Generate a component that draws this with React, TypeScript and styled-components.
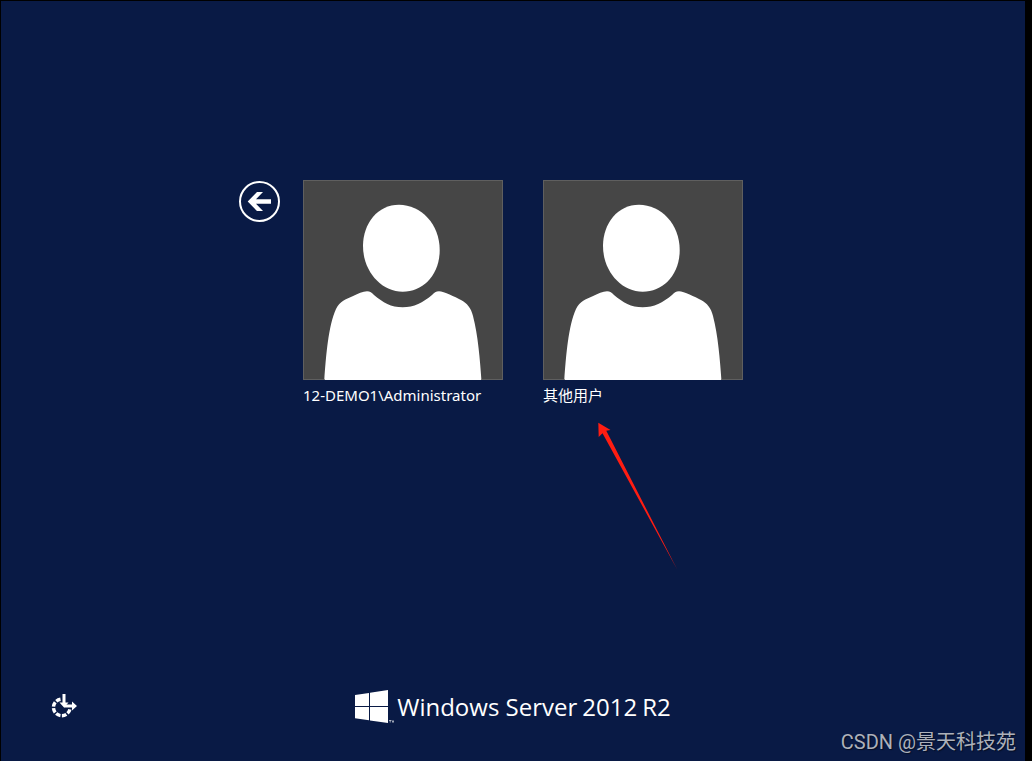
import React from "react";
import styled, { createGlobalStyle } from "styled-components";

const GlobalStyle = createGlobalStyle`
  * { box-sizing: border-box; }
  body {
    margin: 0;
    background: #000;
    color: #fff;
    font-family: "Noto Sans", "Noto Sans CJK SC", sans-serif;
  }
`;

const Screen = styled.div`
  position: relative;
  display: flex;
  flex-direction: column;
  min-height: 100vh;
  border: solid #000;
  border-width: 1px 7px 0 1px;
  background: #091a45;
`;

const Main = styled.main`
  flex: 1;
  display: flex;
  justify-content: center;
  align-items: flex-start;
  gap: 23px;
  padding: 179px 44px 24px 0;
`;

const BackButton = styled.button`
  display: block;
  margin-top: 1px;
  padding: 0;
  border: 0;
  background: none;
  color: inherit;
  cursor: pointer;

  svg { display: block; }
`;

const UserList = styled.ul`
  display: flex;
  gap: 40px;
  margin: 0;
  padding: 0;
  list-style: none;
`;

const UserItem = styled.li`
  position: relative;
  width: 200px;
`;

const UserButton = styled.button`
  display: block;
  width: 100%;
  padding: 0;
  border: 0;
  background: none;
  color: inherit;
  font: inherit;
  font-size: 15px;
  line-height: 20px;
  text-align: left;
  white-space: nowrap;
  cursor: pointer;
`;

const Avatar = styled.svg`
  display: block;
  width: 100%;
  margin-bottom: 5px;
  background: #464646;
`;

const Pointer = styled.svg`
  position: absolute;
  top: 242px;
  left: 54px;
  pointer-events: none;
`;

const Footer = styled.footer`
  display: grid;
  grid-template-columns: 1fr auto 1fr;
  align-items: center;
  padding: 0 50px 36px;
`;

const AccessButton = styled.button`
  justify-self: start;
  padding: 0;
  border: 0;
  background: none;
  color: inherit;
  cursor: pointer;

  svg { display: block; }
`;

const Brand = styled.div`
  display: flex;
  align-items: center;
  gap: 3px;
  height: 36px;
`;

const BrandName = styled.span`
  display: flex;
  gap: 5px;
  font-family: "Open Sans", sans-serif;
  font-size: 24px;
  font-weight: 400;
  line-height: 34px;
  white-space: nowrap;
`;

const Watermark = styled.div`
  position: absolute;
  right: 9px;
  bottom: 5px;
  color: #adb1ba;
  font-family: Roboto, "Noto Sans CJK SC", sans-serif;
  font-size: 20px;
  line-height: 28px;
  text-shadow: 1px 1px 1px #00000080;
`;

function UserTile({ name, children }: { name: string; children?: React.ReactNode }) {
  return (
    <UserItem>
      <UserButton type="button">
        <Avatar viewBox="0 0 200 200" aria-hidden="true">
          <path
            fill="#fff"
            d="M96 24.7C118 24.7 136.7 44 136.7 70C136.7 95 120 111.7 99.7 111.7C78 111.7 60 91 60 66C60 43 75 24.7 96 24.7Z"
          />
          <path
            fill="#fff"
            d="M21.3 200C23 176 25.500 145 33 129C37 121 43 119 49 116.500C55 113.500 60 111.500 64 111.300C67 111.300 69 113 71 115C80 122.500 88 127.300 99.700 127.300C111 127.300 120 122.500 129 115C131 113 133 111.300 136 111.300C141 111.600 152 117 158 120C164 123 168 128 170 136C175 155 177 180 178.400 200Z"
          />
          <rect x="0.5" y="0.5" width="199" height="199" fill="none" stroke="#696969" strokeOpacity="0.7" />
          <path d="M22 199.500H178" stroke="#fff" />
        </Avatar>
        {name}
      </UserButton>
      {children}
    </UserItem>
  );
}

export default function App() {
  return (
    <>
      <GlobalStyle />
      <Screen>
        <Main>
          <BackButton type="button" aria-label="返回">
            <svg width="41" height="41" viewBox="0 0 41 41">
              <circle cx="20.5" cy="20.5" r="19.500" fill="none" stroke="#fff" strokeWidth="2" />
              <path fill="#fff" d="M8.700 20.500L18 11H24L17 18.200H32V22.800H17L24 30H18Z" />
            </svg>
          </BackButton>
          <UserList>
            <UserTile name="12-DEMO1\Administrator" />
            <UserTile name="其他用户">
              <Pointer width="82" height="150" viewBox="0 0 82 150" aria-hidden="true">
                <path fill="#ff1d12" d="M1.300 0.700L13.500 8L9.300 8.800L80.500 148L5.500 11.300L1.700 15Z" />
              </Pointer>
            </UserTile>
          </UserList>
        </Main>
        <Footer>
          <AccessButton type="button" aria-label="轻松使用">
            <svg width="28" height="26" viewBox="1 1 28 26" fill="none" stroke="#fff">
              <path
                strokeWidth="3.400"
                strokeDasharray="4.700 1.500"
                d="M10.500 6.200A8.300 8.300 0 1 0 20 15.500"
              />
              <path strokeWidth="3" d="M14 1V12M14 13H22" />
              <path fill="#fff" stroke="none" d="M9.500 9.500L14 14.500L18.500 9.500ZM22 8.500L27 13L22 17.500Z" />
            </svg>
          </AccessButton>
          <Brand>
            <svg width="39" height="34" viewBox="0 0 39 34" aria-hidden="true">
              <path
                fill="#fff"
                d="M0 5L14 3V16H0ZM15 2.800L33 0V16H15ZM0 17H14V30.300L0 28.300ZM15 17H33V33L15 30.500Z"
              />
              <path stroke="#fff" strokeOpacity="0.6" fill="none" d="M34 30.500H36.500M35.200 30.500V32.500M37.500 32.500V30.500M38.500 30.500V32.500" />
            </svg>
            <BrandName>
              <span>Windows Server</span>
              <span>2012</span>
              <span>R2</span>
            </BrandName>
          </Brand>
        </Footer>
        <Watermark>CSDN @景天科技苑</Watermark>
      </Screen>
    </>
  );
}
